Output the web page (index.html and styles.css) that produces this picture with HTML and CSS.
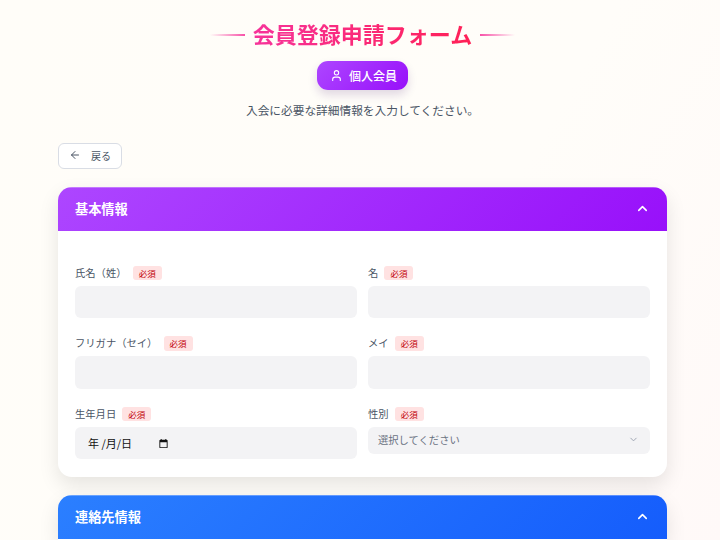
FILE: index.html
```html
<!DOCTYPE html>
<html lang="ja">
<head>
<meta charset="utf-8">
<title>会員登録申請フォーム</title>
<link rel="stylesheet" href="styles.css">
</head>
<body>
<main class="page">
  <header class="hero">
    <div class="title-row">
      <span class="line line-left"></span>
      <h1 class="title">会員登録申請フォーム</h1>
      <span class="line line-right"></span>
    </div>
    <div class="pill">
      <svg class="pill-icon" viewBox="0 0 24 24" fill="none" stroke="currentColor" stroke-width="2" stroke-linecap="round" stroke-linejoin="round"><path d="M19 21v-2a4 4 0 0 0-4-4H9a4 4 0 0 0-4 4v2"/><circle cx="12" cy="7" r="4"/></svg>
      <span>個人会員</span>
    </div>
    <p class="lead">入会に必要な詳細情報を入力してください。</p>
  </header>

  <button class="back" type="button">
    <svg class="back-icon" viewBox="0 0 24 24" fill="none" stroke="currentColor" stroke-width="2" stroke-linecap="round" stroke-linejoin="round"><path d="m12 19-7-7 7-7"/><path d="M19 12H5"/></svg>
    <span>戻る</span>
  </button>

  <section class="card">
    <div class="card-head purple">
      <h2>基本情報</h2>
      <svg class="chev" viewBox="0 0 24 24" fill="none" stroke="currentColor" stroke-width="2.5" stroke-linecap="round" stroke-linejoin="round"><path d="m18 15-6-6-6 6"/></svg>
    </div>
    <div class="card-body">
      <div class="field">
        <label class="label">氏名（姓）<span class="req">必須</span></label>
        <input class="input" type="text">
      </div>
      <div class="field">
        <label class="label">名<span class="req">必須</span></label>
        <input class="input" type="text">
      </div>
      <div class="field">
        <label class="label">フリガナ（セイ）<span class="req">必須</span></label>
        <input class="input" type="text">
      </div>
      <div class="field">
        <label class="label">メイ<span class="req">必須</span></label>
        <input class="input" type="text">
      </div>
      <div class="field">
        <label class="label">生年月日<span class="req">必須</span></label>
        <div class="input date">
          <span class="date-text">年 /月/日</span>
          <svg class="cal" viewBox="0 0 24 24" fill="currentColor"><path d="M19 4h-1V2h-2v2H8V2H6v2H5a2 2 0 0 0-2 2v14a2 2 0 0 0 2 2h14a2 2 0 0 0 2-2V6a2 2 0 0 0-2-2zm0 16H5V9h14v11z"/></svg>
        </div>
      </div>
      <div class="field">
        <label class="label">性別<span class="req">必須</span></label>
        <div class="select">
          <span>選択してください</span>
          <svg class="select-chev" viewBox="0 0 24 24" fill="none" stroke="currentColor" stroke-width="2" stroke-linecap="round" stroke-linejoin="round"><path d="m6 9 6 6 6-6"/></svg>
        </div>
      </div>
    </div>
  </section>

  <section class="card card-open">
    <div class="card-head blue">
      <h2>連絡先情報</h2>
      <svg class="chev" viewBox="0 0 24 24" fill="none" stroke="currentColor" stroke-width="2.5" stroke-linecap="round" stroke-linejoin="round"><path d="m18 15-6-6-6 6"/></svg>
    </div>
  </section>
</main>
</body>
</html>
```
FILE: styles.css
```css
* { box-sizing: border-box; }
html, body { margin: 0; height: 540px; overflow: hidden; }
body {
  font-family: "Noto Sans CJK JP", "Noto Sans", sans-serif;
  background: linear-gradient(120deg, #fffdf8 0%, #fffdf9 60%, #fff9f8 100%);
  color: #4a5565;
}
.page { padding: 20px 53px 0 58px; }
.hero { display: flex; flex-direction: column; align-items: center; }
.title-row { display: flex; align-items: center; gap: 8px; height: 30px; }
.title {
  margin: 0 0 3px;
  font-size: 22px;
  line-height: 27px;
  font-weight: 700;
  background: linear-gradient(90deg, #f6339a, #ff2056);
  -webkit-background-clip: text;
  background-clip: text;
  color: transparent;
}
.line { width: 35px; height: 1.5px; }
.line-left { background: linear-gradient(90deg, rgba(246,51,154,0), rgba(246,51,154,.85)); }
.line-right { background: linear-gradient(90deg, rgba(246,51,154,.85), rgba(246,51,154,0)); }
.pill {
  margin-top: 11px;
  width: 91px;
  height: 29px;
  display: flex;
  align-items: center;
  justify-content: center;
  gap: 6px;
  padding-left: 2px;
  border-radius: 11px;
  background: linear-gradient(135deg, #ad46ff, #9810fa);
  color: #fff;
  font-size: 12px;
  font-weight: 500;
  box-shadow: 0 5px 10px rgba(60,20,110,.16);
}
.pill-icon { width: 13px; height: 13px; }
.lead { margin: 11px 0 1px; font-size: 11.7px; line-height: 18px; color: #4a5565; }
.back {
  margin-top: 23px;
  display: flex;
  align-items: center;
  gap: 10px;
  width: 64px;
  height: 25.5px;
  padding: 0 0 1px 10px;
  background: #fff;
  border: 1px solid #d9dde5;
  border-radius: 6px;
  color: #4a5565;
  font: inherit;
  font-size: 10px;
}
.back-icon { width: 12px; height: 12px; }
.card {
  margin-top: 18px;
  background: #fff;
  border-radius: 14px;
  overflow: hidden;
  box-shadow: 0 8px 20px rgba(0,0,0,.1);
}
.card-open { height: 45.5px; border-radius: 14px 14px 0 0; }
.card-head {
  height: 44px;
  display: flex;
  align-items: center;
  justify-content: space-between;
  padding: 0 17px 1px 17px;
  color: #fff;
  border-top: 1px solid rgba(255,255,255,.3);
}
.card-head h2 { margin: 0; font-size: 13.2px; line-height: 18px; font-weight: 700; }
.purple { background: linear-gradient(135deg, #ad46ff, #9810fa); }
.blue { background: linear-gradient(135deg, #2b7fff, #155dfc); }
.chev { width: 15px; height: 15px; }
.card-body {
  display: grid;
  grid-template-columns: 282px 282px;
  column-gap: 11px;
  row-gap: 18px;
  align-items: start;
  padding: 35.5px 17px 17.5px;
}
.label {
  display: flex;
  align-items: flex-start;
  height: 14.3px;
  margin-bottom: 5.7px;
  font-size: 10.3px;
  line-height: 13px;
  color: #4a5565;
}
.req {
  margin-left: 6.2px;
  width: 29px;
  height: 14.3px;
  display: flex;
  align-items: center;
  justify-content: center;
  flex: none;
  border-radius: 3px;
  background: #ffe2e2;
  color: #c10007;
  font-size: 8.5px;
}
.input {
  display: block;
  width: 100%;
  height: 32.5px;
  border: 0;
  border-radius: 6px;
  background: #f3f3f5;
}
.date {
  display: flex;
  align-items: center;
  padding-left: 13px;
  color: #111;
  font-size: 11px;
}
.date-text { width: 70px; }
.cal { width: 11px; height: 11px; }
.select {
  height: 27px;
  display: flex;
  align-items: center;
  justify-content: space-between;
  padding: 0 11px 2px 10px;
  border-radius: 6px;
  background: #f3f3f5;
  color: #6a7282;
  font-size: 10.3px;
}
.select-chev { width: 11px; height: 11px; color: #99a1af; }
```
